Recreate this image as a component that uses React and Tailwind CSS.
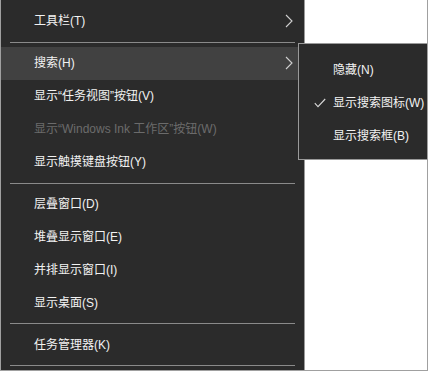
const font = { fontFamily: '"Liberation Sans", "Noto Sans CJK SC", sans-serif' };

const Chevron = () => (
  <svg width="8" height="14" viewBox="0 0 8 14" className="absolute right-[11px] top-1/2 -translate-y-1/2">
    <path d="M1 1 L7 7 L1 13" fill="none" stroke="#d0d0d0" strokeWidth="1.1" />
  </svg>
);

const Item = ({ label, arrow, active, disabled }) => (
  <div
    className={`relative h-[33px] flex items-center pl-[33px] text-[12px] ${
      active ? "bg-[#414141]" : ""
    } ${disabled ? "text-[#6b6b6b]" : "text-[#f2f2f2]"}`}
  >
    <span>{label}</span>
    {arrow && <Chevron />}
  </div>
);

const Sep = () => (
  <div className="py-[4px] pl-[9px] pr-[9px]">
    <div className="h-px bg-[#8a8a8a]" />
  </div>
);

export default function App() {
  return (
    <div
      className="relative w-[428px] h-[371px] bg-white border-l border-r border-b border-[#a0a0a0] overflow-hidden"
      style={font}
    >
      {/* main context menu */}
      <div className="w-[304px] h-full bg-[#2b2b2b] border-r border-[#9a9a9a] pt-[5px] flex flex-col">
        <Item label="工具栏(T)" arrow />
        <Sep />
        <Item label="搜索(H)" arrow active />
        <Item label="显示“任务视图”按钮(V)" />
        <Item label="显示“Windows Ink 工作区”按钮(W)" disabled />
        <Item label="显示触摸键盘按钮(Y)" />
        <Sep />
        <Item label="层叠窗口(D)" />
        <Item label="堆叠显示窗口(E)" />
        <Item label="并排显示窗口(I)" />
        <Item label="显示桌面(S)" />
        <Sep />
        <Item label="任务管理器(K)" />
        <Sep />
      </div>

      {/* search submenu */}
      <div className="absolute left-[297px] top-[43px] w-[131px] h-[117px] bg-[#2b2b2b] border border-[#9a9a9a] pt-[9px]">
        {[
          { label: "隐藏(N)" },
          { label: "显示搜索图标(W)", checked: true },
          { label: "显示搜索框(B)" },
        ].map((it) => (
          <div key={it.label} className="relative h-[33px] flex items-center pl-[34px] text-[12px] text-[#f2f2f2] whitespace-nowrap">
            {it.checked && (
              <svg width="12" height="10" viewBox="0 0 12 10" className="absolute left-[15px] top-1/2 -translate-y-1/2">
                <path d="M0.8 5.2 L4 8.6 L11.2 1" fill="none" stroke="#d8d8d8" strokeWidth="1.1" />
              </svg>
            )}
            <span>{it.label}</span>
          </div>
        ))}
      </div>
    </div>
  );
}
